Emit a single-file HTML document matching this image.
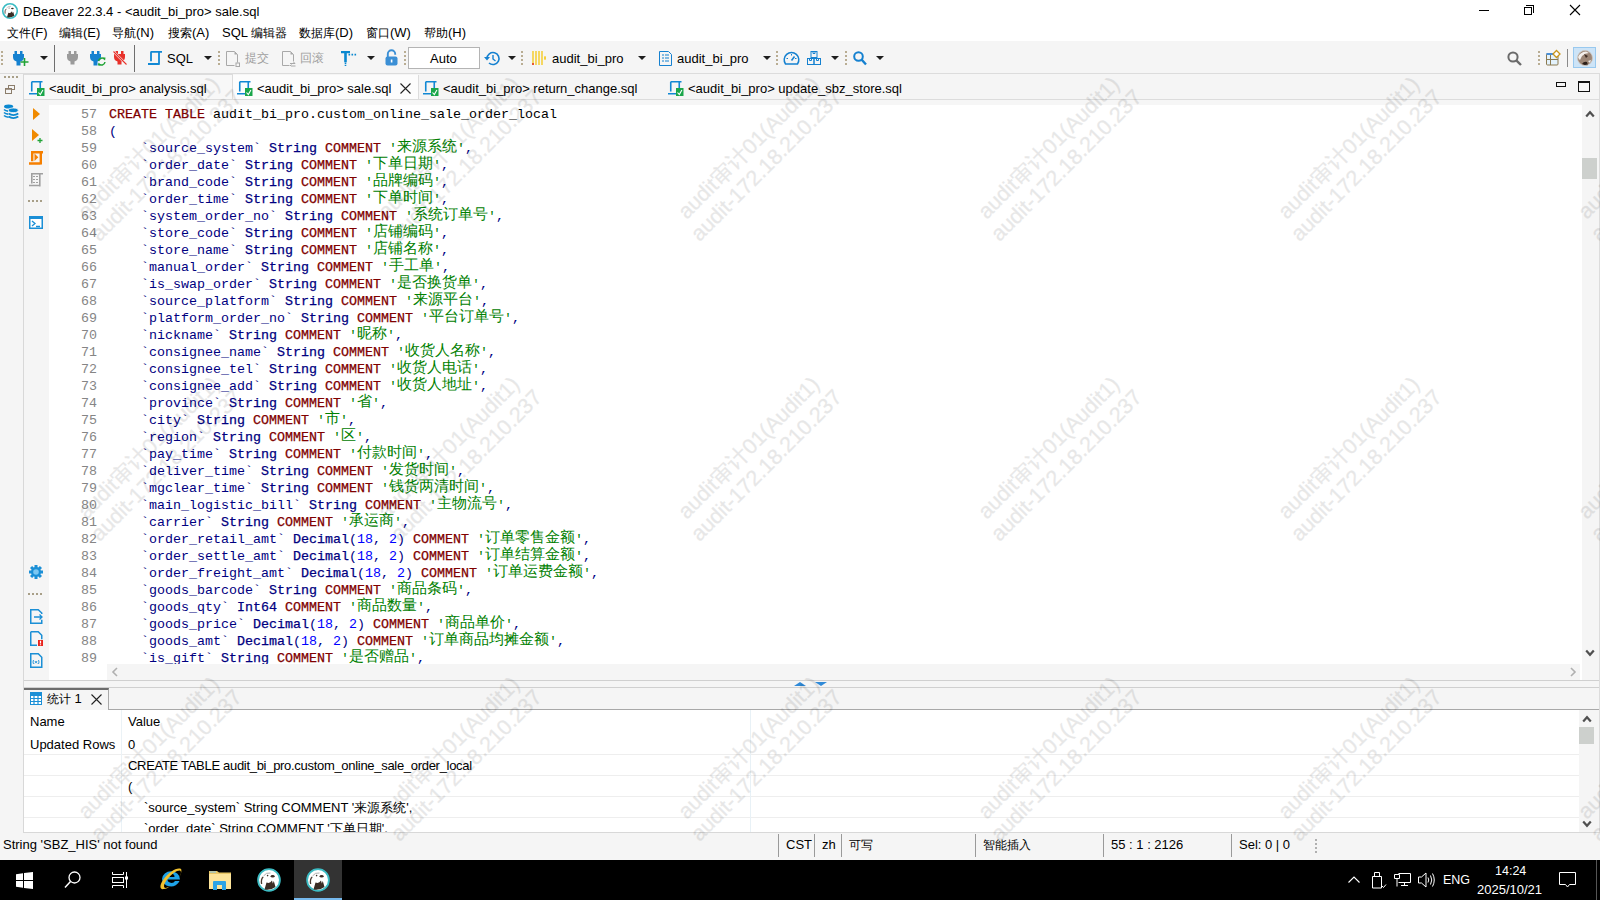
<!DOCTYPE html>
<html><head><meta charset="utf-8">
<style>
*{box-sizing:border-box;margin:0;padding:0}
html,body{width:1600px;height:900px;overflow:hidden;background:#f5f5f5;font-family:"Liberation Sans",sans-serif;font-size:13px;color:#000;position:relative}
.a{position:absolute}
.tx{position:absolute;white-space:nowrap;line-height:16px}
svg{position:absolute;overflow:visible}
.dd{position:absolute;width:0;height:0;border-left:4px solid transparent;border-right:4px solid transparent;border-top:4px solid #1e1e1e}
.grip{position:absolute;width:2px;height:16px;background:repeating-linear-gradient(to bottom,#b9ad93 0,#b9ad93 2px,transparent 2px,transparent 4px)}
.sep{position:absolute;width:1px;background:#6e6e6e}
.code{position:absolute;left:109px;font-family:"Liberation Mono",monospace;font-size:13.33px;line-height:17px;white-space:pre;color:#000080}
.code div{height:17px}
.k{color:#800000;font-weight:normal;-webkit-text-stroke:0.25px #800000}
.t{color:#000080;font-weight:normal;-webkit-text-stroke:0.25px #000080}
.s{color:#008000}
.n{color:#0000ff}
.p{color:#000}
.cj{display:inline-block;overflow:visible;vertical-align:top;position:relative;top:-3px;font-family:"Liberation Sans",sans-serif;font-size:15px;line-height:17px}
.ln{position:absolute;left:49px;width:48px;text-align:right;font-family:"Liberation Mono",monospace;font-size:13.33px;line-height:17px;color:#858585;white-space:pre}
.zh{font-size:12px;vertical-align:top;position:relative;top:0px}
</style></head><body>
<style>
.wm{transform:rotate(-45deg);text-align:center;font-size:21.5px;line-height:25px;color:#000;opacity:0.09;-webkit-text-stroke:0.35px #000;white-space:nowrap}
</style>

<div class="a" style="left:0;top:0;width:1600px;height:41px;background:#fff"></div>
<!-- app icon -->
<svg style="left:2px;top:3px" width="16" height="16" viewBox="0 0 24 24">
<circle cx="12" cy="12" r="10.9" fill="#fff" stroke="#3cbcc4" stroke-width="2.4"/>
<path d="M7.5 21.5 L9.5 14.5 Q13 16 15 12.5 L15.8 15.5 L16.8 13 L18.5 19 Q14 22.5 7.5 21.5z" fill="#3a2c24"/>
<ellipse cx="15.6" cy="8.2" rx="2" ry="1.2" fill="#3a2c24"/>
<circle cx="10.6" cy="7.6" r="0.8" fill="#3a2c24"/>
<path d="M4.6 16 Q3.8 11 6.2 9" stroke="#4a3a30" stroke-width="1.3" fill="none"/>
<path d="M6.5 8 Q9 4.2 13.5 5" stroke="#9a9a9a" stroke-width=".8" fill="none"/>
</svg>
<div class="tx" style="left:23px;top:4px">DBeaver 22.3.4 - &lt;audit_bi_pro&gt; sale.sql</div>
<!-- window controls -->
<div class="a" style="left:1479px;top:10px;width:10px;height:1px;background:#000"></div>
<div class="a" style="left:1524px;top:7px;width:8px;height:8px;border:1px solid #000"></div>
<div class="a" style="left:1526px;top:5px;width:8px;height:8px;border-top:1px solid #000;border-right:1px solid #000"></div>
<svg style="left:1570px;top:5px" width="10" height="10" viewBox="0 0 10 10"><path d="M0 0 L10 10 M10 0 L0 10" stroke="#000" stroke-width="1.1"/></svg>
<!-- menu -->
<div class="tx" style="left:7px;top:25px"><span class="zh">文件</span>(F)</div>
<div class="tx" style="left:59px;top:25px"><span class="zh">编辑</span>(E)</div>
<div class="tx" style="left:112px;top:25px"><span class="zh">导航</span>(N)</div>
<div class="tx" style="left:168px;top:25px"><span class="zh">搜索</span>(A)</div>
<div class="tx" style="left:222px;top:25px">SQL <span class="zh">编辑器</span></div>
<div class="tx" style="left:299px;top:25px"><span class="zh">数据库</span>(D)</div>
<div class="tx" style="left:366px;top:25px"><span class="zh">窗口</span>(W)</div>
<div class="tx" style="left:424px;top:25px"><span class="zh">帮助</span>(H)</div>

<div class="a" style="left:0;top:41px;width:1600px;height:33px;background:#f5f5f5;border-bottom:1px solid #dcdcdc"></div>
<div class="grip" style="left:1px;top:51px"></div>
<!-- new connection plug + -->
<svg style="left:13px;top:50px" width="16" height="16" viewBox="0 0 16 16">
<path d="M1.5 1 h2.5 v3.5 h-2.5z M7 1 h2.5 v3.5 h-2.5z" fill="#1581d0"/>
<path d="M0 4 h11 v3 q0 3.5 -3.5 4.5 v4 h-4 v-4 q-3.5 -1 -3.5 -4.5z" fill="#1581d0"/>
<path d="M11.5 8 v8 M7.5 12 h8" stroke="#21a336" stroke-width="1.6"/>
</svg>
<div class="dd" style="left:40px;top:56px"></div>
<div class="sep" style="left:54px;top:45px;height:27px"></div>
<!-- disconnect gray -->
<svg style="left:67px;top:51px" width="12" height="14" viewBox="0 0 12 14">
<path d="M1.5 0 h2.5 v3.5 h-2.5z M7 0 h2.5 v3.5 h-2.5z" fill="#9a9a9a"/>
<path d="M0 3 h11 v3 q0 3.5 -3.5 4.5 v3 h-4 v-3 q-3.5 -1 -3.5 -4.5z" fill="#9a9a9a"/>
</svg>
<!-- reconnect -->
<svg style="left:90px;top:51px" width="16" height="15" viewBox="0 0 16 15">
<path d="M1.5 0 h2.5 v3.5 h-2.5z M7 0 h2.5 v3.5 h-2.5z" fill="#1581d0"/>
<path d="M0 3 h11 v3 q0 3.5 -3.5 4.5 v4 h-4 v-4 q-3.5 -1 -3.5 -4.5z" fill="#1581d0"/>
<path d="M8.5 10 a3.6 3.6 0 0 1 6.3 -1.6 M15 11 a3.6 3.6 0 0 1 -6.3 1.8" stroke="#21a336" stroke-width="1.5" fill="none"/>
<path d="M13 6.5 l2.5 0 l-.5 3z M10.5 14.5 l-2.5 0 l.5 -3z" fill="#21a336"/>
</svg>
<!-- disconnect all red -->
<svg style="left:113px;top:51px" width="14" height="14" viewBox="0 0 14 14">
<path d="M2.5 0 h2.5 v3.5 h-2.5z M8 0 h2.5 v3.5 h-2.5z" fill="#e8312a"/>
<path d="M1 3 h11 v3 q0 3.5 -3.5 4.5 v3 h-4 v-3 q-3.5 -1 -3.5 -4.5z" fill="#e8312a"/>
<path d="M0.5 0.5 L13.5 13.5" stroke="#f5f5f5" stroke-width="2.4"/>
<path d="M0.5 0.5 L13.5 13.5" stroke="#e8312a" stroke-width="1.1"/>
</svg>
<div class="sep" style="left:134px;top:45px;height:27px"></div>
<!-- SQL script icon -->
<svg style="left:148px;top:50px" width="15" height="16" viewBox="0 0 15 16">
<path d="M2.5 1.9 h11.5 M3 2 v9.2 M11 2 v12.5 M0 14 h11.5" stroke="#1188d4" stroke-width="1.8" fill="none"/>
</svg>
<div class="tx" style="left:167px;top:51px">SQL</div>
<div class="dd" style="left:204px;top:56px"></div>
<div class="grip" style="left:218px;top:51px"></div>
<!-- commit (disabled) -->
<svg style="left:226px;top:51px" width="14" height="16" viewBox="0 0 14 16">
<path d="M0.5 0.5 h8 l3 3 v8 M0.5 0.5 v14 h8" stroke="#a8a8a8" stroke-width="1" fill="none"/>
<path d="M8.5 0.5 v3 h3z" fill="#a8a8a8"/>
<rect x="10" y="12" width="3.5" height="3.5" stroke="#a8a8a8" fill="none"/>
</svg>
<div class="tx" style="left:245px;top:50px;color:#a0a0a0"><span class="zh">提交</span></div>
<svg style="left:282px;top:51px" width="14" height="16" viewBox="0 0 14 16">
<path d="M0.5 0.5 h8 l3 3 v7 M0.5 0.5 v14 h7" stroke="#a8a8a8" stroke-width="1" fill="none"/>
<path d="M8.5 0.5 v3 h3z" fill="#a8a8a8"/>
<path d="M8 12.5 h5 M9 15 h4.5 M11.5 11 l1.5 1.5 M9.5 13.5 l-1.5 1.5" stroke="#a8a8a8" fill="none"/>
</svg>
<div class="tx" style="left:300px;top:50px;color:#a0a0a0"><span class="zh">回滚</span></div>
<!-- T format -->
<svg style="left:341px;top:51px" width="16" height="15" viewBox="0 0 16 15">
<path d="M0 0 h9 v2.2 h-3.2 v9 h-2.6 v-9 h-3.2z" fill="#0a88d0"/>
<path d="M7.5 3.6 h1.6 M10.5 3.6 h1.6 M13.5 3.6 h1.6 M4.5 11.5 v1.5 M4.5 13.8 v1.2" stroke="#0a88d0" stroke-width="1.6"/>
</svg>
<div class="dd" style="left:367px;top:56px"></div>
<!-- lock -->
<svg style="left:385px;top:50px" width="13" height="16" viewBox="0 0 13 16">
<path d="M2.8 7 v-3 a3.7 3.7 0 0 1 7.4 0 v0.8" stroke="#3b8fd5" stroke-width="1.9" fill="none"/>
<rect x="0.5" y="6.5" width="12" height="9" rx="2" fill="#3b8fd5"/>
<rect x="5.8" y="9.5" width="1.6" height="3" fill="#fff"/>
</svg>
<div class="grip" style="left:404px;top:51px"></div>
<div class="a" style="left:408px;top:47px;width:72px;height:22px;background:#fff;border:1px solid #b4b4b4"></div>
<div class="tx" style="left:430px;top:51px">Auto</div>
<!-- history -->
<svg style="left:484px;top:51px" width="16" height="15" viewBox="0 0 16 15">
<path d="M3 7.5 a6 6 0 1 1 2 4.5" stroke="#1581d0" stroke-width="1.6" fill="none"/>
<path d="M0 6 l3 3.5 l3 -3.5 z" fill="#1581d0"/>
<path d="M9 4 v4 l2.5 2" stroke="#1581d0" stroke-width="1.4" fill="none"/>
</svg>
<div class="dd" style="left:508px;top:56px"></div>
<div class="grip" style="left:521px;top:51px"></div>
<!-- datasource bars -->
<svg style="left:532px;top:51px" width="16" height="15" viewBox="0 0 16 15">
<path d="M1 0 v14 M4 0 v14 M7 0 v14 M10 0 v14" stroke="#f5c400" stroke-width="1.2"/>
<path d="M1 12 v2" stroke="#e02020" stroke-width="1.4"/>
<path d="M13 5 v4 M12 7 h2" stroke="#f5c400" stroke-width="1"/>
</svg>
<div class="tx" style="left:552px;top:51px">audit_bi_pro</div>
<div class="dd" style="left:638px;top:56px"></div>
<!-- schema doc -->
<svg style="left:659px;top:51px" width="13" height="15" viewBox="0 0 13 15">
<path d="M0.5 0.5 h9 l3 3 v11 h-12 z" stroke="#1581d0" stroke-width="1" fill="none"/>
<path d="M3 4 h2 M6 4 h4 M3 7 h2 M6 7 h4 M3 10 h2 M6 10 h4" stroke="#1581d0" stroke-width="1.2"/>
</svg>
<div class="tx" style="left:677px;top:51px">audit_bi_pro</div>
<div class="dd" style="left:763px;top:56px"></div>
<div class="grip" style="left:776px;top:51px"></div>
<!-- gauge -->
<svg style="left:783px;top:51px" width="17" height="14" viewBox="0 0 17 14">
<path d="M2.5 13 a7.3 7.3 0 1 1 12 0 z" stroke="#1581d0" stroke-width="1.5" fill="none"/>
<path d="M8.5 9.5 L11.5 5.5" stroke="#1581d0" stroke-width="1.6"/>
<path d="M3.5 7.5 h1.5 M8.5 3 v1.5 M12 7.5 h1.5" stroke="#1581d0" stroke-width="1"/>
</svg>
<!-- boxes -->
<svg style="left:807px;top:51px" width="14" height="14" viewBox="0 0 14 14">
<rect x="4" y="0.5" width="6" height="6" stroke="#1581d0" fill="none"/>
<rect x="0.5" y="7.5" width="6.5" height="6" stroke="#1581d0" fill="none"/>
<rect x="7" y="7.5" width="6.5" height="6" stroke="#1581d0" fill="none"/>
<path d="M6 0.5 v2 h2 v-2 M2.5 7.5 v2 h2 v-2 M9.5 7.5 v2 h2 v-2" stroke="#1581d0" fill="none"/>
</svg>
<div class="dd" style="left:831px;top:56px"></div>
<div class="grip" style="left:845px;top:51px"></div>
<!-- search blue -->
<svg style="left:853px;top:51px" width="14" height="15" viewBox="0 0 14 15">
<circle cx="5.5" cy="5.5" r="4.3" stroke="#1581d0" stroke-width="2" fill="none"/>
<path d="M8.5 8.5 L13 13.5" stroke="#1581d0" stroke-width="2.4"/>
</svg>
<div class="dd" style="left:876px;top:56px"></div>
<!-- right side -->
<svg style="left:1507px;top:51px" width="15" height="15" viewBox="0 0 15 15">
<circle cx="6" cy="6" r="4.6" stroke="#6b6b6b" stroke-width="2" fill="none"/>
<path d="M9.3 9.3 L14 14" stroke="#6b6b6b" stroke-width="2.4"/>
</svg>
<div class="grip" style="left:1538px;top:51px;height:14px"></div>
<svg style="left:1546px;top:50px" width="16" height="16" viewBox="0 0 16 16">
<rect x="0.5" y="3.5" width="11.5" height="11.5" rx="1" fill="#e3f2fc" stroke="#8b7a50"/>
<rect x="0.5" y="3" width="11.5" height="2" fill="#4a90d9"/>
<path d="M4.5 5 v10 M0.5 9.5 h11.5" stroke="#8b7a50"/>
<path d="M10.5 0.5 L14 4 L10.5 7.5 L7 4 z" fill="#fff" stroke="#c9961a" stroke-width="1.3"/>
</svg>
<div class="sep" style="left:1567px;top:49px;height:18px;background:#8a8a8a"></div>
<div class="a" style="left:1573px;top:47px;width:23px;height:21px;background:#cde4f7;border:1px solid #99c9ef"></div>
<svg style="left:1577px;top:50px" width="16" height="16" viewBox="0 0 16 16">
<circle cx="8" cy="8" r="7.5" fill="#9c8676"/>
<path d="M1 7 Q3 2 9 1.5 L12 3 Q8 3 5 6 L3 10 Q1.5 9 1 7z" fill="#f4f0ec"/>
<path d="M7 4 L11 6 L9 8z" fill="#3a2a22"/>
<path d="M5 14 Q7 11 10 12 L11 15 Q8 16 5 14z" fill="#2a1e18"/>
<path d="M11 11 L14 10 L13 13z" fill="#eee"/>
<circle cx="8" cy="8" r="7.5" fill="none" stroke="#cfc6bf" stroke-width=".8"/>
</svg>

<!-- left trim -->
<div class="a" style="left:0;top:74px;width:24px;height:759px;background:#f5f5f5;border-right:1px solid #d8d8d8"></div>
<div class="a" style="left:4px;top:76px;width:15px;height:2px;background:repeating-linear-gradient(to right,#a89f88 0,#a89f88 2px,transparent 2px,transparent 4px)"></div>
<svg style="left:5px;top:85px" width="10" height="9" viewBox="0 0 10 9">
<rect x="3.5" y="0.5" width="6" height="4" stroke="#8b7d6b" fill="#f5f5f5"/>
<rect x="0.5" y="3.5" width="6" height="5" stroke="#8b7d6b" fill="#f5f5f5"/>
<path d="M0.5 4 h6" stroke="#8b7d6b" stroke-width="1.5"/>
</svg>
<!-- db navigator icon -->
<svg style="left:3px;top:103px" width="17" height="17" viewBox="0 0 17 17">
<ellipse cx="5.6" cy="3.5" rx="4.6" ry="2" fill="#0a88d0"/>
<path d="M1 6.5 q1.5 1.5 4 1.6 M1 9.5 q1.5 1.5 4 1.6 M1 12.5 q1.5 1.5 4.5 1.8" stroke="#0a88d0" stroke-width="1.6" fill="none"/>
<ellipse cx="10.3" cy="7.3" rx="4.9" ry="2.3" fill="#0a88d0" stroke="#f5f5f5" stroke-width=".8"/>
<path d="M5.5 10.6 q4.8 3.2 9.8 0 M5.5 13.6 q4.8 3.2 9.8 0" stroke="#0a88d0" stroke-width="1.8" fill="none"/>
</svg>
<!-- tab strip -->
<div class="a" style="left:24px;top:74px;width:1576px;height:27px;background:#f5f5f5;border-bottom:1px solid #dcdcdc"></div>
<div class="a" style="left:24px;top:74px;width:209px;height:26px;background:#f8f8f8;border-top:1px solid #dcdcdc;border-right:1px solid #dcdcdc"></div>
<div class="a" style="left:232px;top:75px;width:187px;height:26px;background:#fcfcfc;border-left:1px solid #dcdcdc;border-right:1px solid #dcdcdc"></div>
<!-- tab icons -->
<svg style="left:29px;top:81px" width="16" height="16" viewBox="0 0 16 16">
<path d="M2.5 0.8 h11 M2.75 1 v9.5 M11.25 1 v6.5 M0 12.75 h8.5" stroke="#1188d4" stroke-width="1.6" fill="none"/>
<rect x="8" y="7" width="7.5" height="8" fill="#1aa64a"/>
<path d="M9.5 11.5 l1.8 2 l2.6 -4.5" stroke="#fff" stroke-width="1.1" fill="none"/>
</svg>
<div class="tx" style="left:49px;top:81px">&lt;audit_bi_pro&gt; analysis.sql</div>
<svg style="left:237px;top:81px" width="16" height="16" viewBox="0 0 16 16">
<path d="M2.5 0.8 h11 M2.75 1 v9.5 M11.25 1 v6.5 M0 12.75 h8.5" stroke="#1188d4" stroke-width="1.6" fill="none"/>
<rect x="8" y="7" width="7.5" height="8" fill="#1aa64a"/>
<path d="M9.5 11.5 l1.8 2 l2.6 -4.5" stroke="#fff" stroke-width="1.1" fill="none"/>
</svg>
<div class="tx" style="left:257px;top:81px">&lt;audit_bi_pro&gt; sale.sql</div>
<svg style="left:400px;top:83px" width="11" height="11" viewBox="0 0 11 11"><path d="M0.5 0.5 L10.5 10.5 M10.5 0.5 L0.5 10.5" stroke="#222" stroke-width="1.1"/></svg>
<svg style="left:423px;top:81px" width="16" height="16" viewBox="0 0 16 16">
<path d="M2.5 0.8 h11 M2.75 1 v9.5 M11.25 1 v6.5 M0 12.75 h8.5" stroke="#1188d4" stroke-width="1.6" fill="none"/>
<rect x="8" y="7" width="7.5" height="8" fill="#1aa64a"/>
<path d="M9.5 11.5 l1.8 2 l2.6 -4.5" stroke="#fff" stroke-width="1.1" fill="none"/>
</svg>
<div class="tx" style="left:443px;top:81px">&lt;audit_bi_pro&gt; return_change.sql</div>
<svg style="left:668px;top:81px" width="16" height="16" viewBox="0 0 16 16">
<path d="M2.5 0.8 h11 M2.75 1 v9.5 M11.25 1 v6.5 M0 12.75 h8.5" stroke="#1188d4" stroke-width="1.6" fill="none"/>
<rect x="8" y="7" width="7.5" height="8" fill="#1aa64a"/>
<path d="M9.5 11.5 l1.8 2 l2.6 -4.5" stroke="#fff" stroke-width="1.1" fill="none"/>
</svg>
<div class="tx" style="left:688px;top:81px">&lt;audit_bi_pro&gt; update_sbz_store.sql</div>
<div class="a" style="left:24px;top:99px;width:1576px;height:1px;background:#dcdcdc"></div>
<!-- min / max -->
<div class="a" style="left:1556px;top:82px;width:10px;height:5px;border:1.5px solid #111"></div>
<div class="a" style="left:1578px;top:81px;width:12px;height:11px;border:1.5px solid #111;border-top-width:2.5px"></div>

<div class="a" style="left:24px;top:100px;width:1576px;height:581px;background:#fff;border-bottom:1px solid #d0d0d0"></div>
<div class="a" style="left:24px;top:100px;width:25px;height:580px;background:#f5f5f5"></div>
<div class="a" style="left:49px;top:100px;width:1533px;height:5px;background:#f6f6f6"></div>
<div class="ln" style="top:106px">57
58
59
60
61
62
63
64
65
66
67
68
69
70
71
72
73
74
75
76
77
78
79
80
81
82
83
84
85
86
87
88
89</div>
<div class="code" style="top:106px"><div><span class="k">CREATE TABLE</span> <span class="p">audit_bi_pro.custom_online_sale_order_local</span></div><div>(</div><div>    `source_system` <span class="t">String</span> <span class="k">COMMENT</span> <span class="s">'<span class="cj" style="width:60px">来源系统</span>'</span>,</div><div>    `order_date` <span class="t">String</span> <span class="k">COMMENT</span> <span class="s">'<span class="cj" style="width:60px">下单日期</span>'</span>,</div><div>    `brand_code` <span class="t">String</span> <span class="k">COMMENT</span> <span class="s">'<span class="cj" style="width:60px">品牌编码</span>'</span>,</div><div>    `order_time` <span class="t">String</span> <span class="k">COMMENT</span> <span class="s">'<span class="cj" style="width:60px">下单时间</span>'</span>,</div><div>    `system_order_no` <span class="t">String</span> <span class="k">COMMENT</span> <span class="s">'<span class="cj" style="width:75px">系统订单号</span>'</span>,</div><div>    `store_code` <span class="t">String</span> <span class="k">COMMENT</span> <span class="s">'<span class="cj" style="width:60px">店铺编码</span>'</span>,</div><div>    `store_name` <span class="t">String</span> <span class="k">COMMENT</span> <span class="s">'<span class="cj" style="width:60px">店铺名称</span>'</span>,</div><div>    `manual_order` <span class="t">String</span> <span class="k">COMMENT</span> <span class="s">'<span class="cj" style="width:45px">手工单</span>'</span>,</div><div>    `is_swap_order` <span class="t">String</span> <span class="k">COMMENT</span> <span class="s">'<span class="cj" style="width:75px">是否换货单</span>'</span>,</div><div>    `source_platform` <span class="t">String</span> <span class="k">COMMENT</span> <span class="s">'<span class="cj" style="width:60px">来源平台</span>'</span>,</div><div>    `platform_order_no` <span class="t">String</span> <span class="k">COMMENT</span> <span class="s">'<span class="cj" style="width:75px">平台订单号</span>'</span>,</div><div>    `nickname` <span class="t">String</span> <span class="k">COMMENT</span> <span class="s">'<span class="cj" style="width:30px">昵称</span>'</span>,</div><div>    `consignee_name` <span class="t">String</span> <span class="k">COMMENT</span> <span class="s">'<span class="cj" style="width:75px">收货人名称</span>'</span>,</div><div>    `consignee_tel` <span class="t">String</span> <span class="k">COMMENT</span> <span class="s">'<span class="cj" style="width:75px">收货人电话</span>'</span>,</div><div>    `consignee_add` <span class="t">String</span> <span class="k">COMMENT</span> <span class="s">'<span class="cj" style="width:75px">收货人地址</span>'</span>,</div><div>    `province` <span class="t">String</span> <span class="k">COMMENT</span> <span class="s">'<span class="cj" style="width:15px">省</span>'</span>,</div><div>    `city` <span class="t">String</span> <span class="k">COMMENT</span> <span class="s">'<span class="cj" style="width:15px">市</span>'</span>,</div><div>    `region` <span class="t">String</span> <span class="k">COMMENT</span> <span class="s">'<span class="cj" style="width:15px">区</span>'</span>,</div><div>    `pay_time` <span class="t">String</span> <span class="k">COMMENT</span> <span class="s">'<span class="cj" style="width:60px">付款时间</span>'</span>,</div><div>    `deliver_time` <span class="t">String</span> <span class="k">COMMENT</span> <span class="s">'<span class="cj" style="width:60px">发货时间</span>'</span>,</div><div>    `mgclear_time` <span class="t">String</span> <span class="k">COMMENT</span> <span class="s">'<span class="cj" style="width:90px">钱货两清时间</span>'</span>,</div><div>    `main_logistic_bill` <span class="t">String</span> <span class="k">COMMENT</span> <span class="s">'<span class="cj" style="width:60px">主物流号</span>'</span>,</div><div>    `carrier` <span class="t">String</span> <span class="k">COMMENT</span> <span class="s">'<span class="cj" style="width:45px">承运商</span>'</span>,</div><div>    `order_retail_amt` <span class="t">Decimal</span>(<span class="n">18</span>, <span class="n">2</span>) <span class="k">COMMENT</span> <span class="s">'<span class="cj" style="width:90px">订单零售金额</span>'</span>,</div><div>    `order_settle_amt` <span class="t">Decimal</span>(<span class="n">18</span>, <span class="n">2</span>) <span class="k">COMMENT</span> <span class="s">'<span class="cj" style="width:90px">订单结算金额</span>'</span>,</div><div>    `order_freight_amt` <span class="t">Decimal</span>(<span class="n">18</span>, <span class="n">2</span>) <span class="k">COMMENT</span> <span class="s">'<span class="cj" style="width:90px">订单运费金额</span>'</span>,</div><div>    `goods_barcode` <span class="t">String</span> <span class="k">COMMENT</span> <span class="s">'<span class="cj" style="width:60px">商品条码</span>'</span>,</div><div>    `goods_qty` <span class="t">Int64</span> <span class="k">COMMENT</span> <span class="s">'<span class="cj" style="width:60px">商品数量</span>'</span>,</div><div>    `goods_price` <span class="t">Decimal</span>(<span class="n">18</span>, <span class="n">2</span>) <span class="k">COMMENT</span> <span class="s">'<span class="cj" style="width:60px">商品单价</span>'</span>,</div><div>    `goods_amt` <span class="t">Decimal</span>(<span class="n">18</span>, <span class="n">2</span>) <span class="k">COMMENT</span> <span class="s">'<span class="cj" style="width:120px">订单商品均摊金额</span>'</span>,</div><div>    `is_gift` <span class="t">String</span> <span class="k">COMMENT</span> <span class="s">'<span class="cj" style="width:60px">是否赠品</span>'</span>,</div></div>
<div class="a" style="left:107px;top:664px;width:1473px;height:16px;background:#f5f5f5"></div>
<div class="a" style="left:1582px;top:100px;width:18px;height:580px;background:#f5f5f5"></div>
<!-- ruler icons -->
<svg style="left:33px;top:108px" width="7" height="12" viewBox="0 0 7 12"><path d="M0 0 L7 6 L0 12 z" fill="#f08a00"/></svg>
<svg style="left:32px;top:129px" width="11" height="14" viewBox="0 0 11 14"><path d="M0 0 L7 6 L0 12 z" fill="#f08a00"/><path d="M8 9 v5 M5.5 11.5 h5" stroke="#21a336" stroke-width="1.3"/></svg>
<svg style="left:29px;top:150px" width="15" height="16" viewBox="0 0 15 16">
<path d="M2 2.2 h12 M3.2 2 v9.2 M11.8 2 v12.5 M0 13.5 h11.5" stroke="#f57f00" stroke-width="2.4" fill="none"/>
<path d="M5.5 3.5 L9.3 7.2 L5.5 11 z" fill="#f57f00"/>
</svg>
<svg style="left:29px;top:172px" width="15" height="16" viewBox="0 0 15 16">
<path d="M2 1.8 h12 M2.8 2 v9.5 M10.8 2 v12.5 M0 13.5 h11" stroke="#a0a0a0" stroke-width="1.6" fill="none"/>
<path d="M4 4.5 h2 M7 4.5 h2 M4 7.5 h2 M7 7.5 h2 M4 10.5 h2 M7 10.5 h2" stroke="#a0a0a0" stroke-width="1.1"/>
</svg>
<div class="a" style="left:28px;top:200px;width:14px;height:2px;background:repeating-linear-gradient(to right,#a89f88 0,#a89f88 2px,transparent 2px,transparent 4px)"></div>
<svg style="left:29px;top:216px" width="14" height="13" viewBox="0 0 14 13">
<rect x="0.75" y="0.75" width="12.5" height="11.5" stroke="#1b8fd6" stroke-width="1.5" fill="#fff"/>
<path d="M0.75 2 h12.5" stroke="#1b8fd6" stroke-width="2"/>
<path d="M3 5 L6 7.5 L3 10 M7 10.5 h4" stroke="#1b8fd6" stroke-width="1.3" fill="none"/>
</svg>
<svg style="left:29px;top:565px" width="14" height="14" viewBox="0 0 14 14">
<g fill="#1b8fd6"><circle cx="7" cy="7" r="5"/>
<rect x="5.5" y="0" width="3" height="14"/><rect x="0" y="5.5" width="14" height="3"/>
<rect x="5.5" y="0" width="3" height="14" transform="rotate(45 7 7)"/><rect x="0" y="5.5" width="14" height="3" transform="rotate(45 7 7)"/></g>
<circle cx="7" cy="7" r="2.8" fill="#7cc8f2"/>
</svg>
<div class="a" style="left:28px;top:593px;width:14px;height:2px;background:repeating-linear-gradient(to right,#a89f88 0,#a89f88 2px,transparent 2px,transparent 4px)"></div>
<svg style="left:30px;top:609px" width="13" height="15" viewBox="0 0 13 15">
<path d="M11.75 5 v-1 l-3.5 -3.25 h-7.5 v13.5 h11 v-3.5" stroke="#1b8fd6" stroke-width="1.5" fill="none"/>
<path d="M4 8 h8 M9.5 5.5 L12 8 L9.5 10.5" stroke="#1b8fd6" stroke-width="1.3" fill="none"/>
</svg>
<svg style="left:30px;top:631px" width="13" height="15" viewBox="0 0 13 15">
<path d="M0.75 0.75 h7.5 l3.5 3.5 v4 M7 14.25 h-6.25 v-13.5" stroke="#1b8fd6" stroke-width="1.5" fill="none"/>
<rect x="8" y="9" width="5" height="6" fill="#e8241d"/>
<path d="M10.5 9.8 v2.6 M10.5 13.3 v1" stroke="#fff" stroke-width="1.2"/>
</svg>
<svg style="left:30px;top:653px" width="13" height="15" viewBox="0 0 13 15">
<path d="M0.75 0.75 h7.5 l3.5 3.5 v10 h-11 z" stroke="#1b8fd6" stroke-width="1.5" fill="none"/>
<path d="M3.5 7 q-1 2 0 4 M8.5 7 q1 2 0 4 M4.8 8 l2.4 2.4 M7.2 8 l-2.4 2.4" stroke="#1b8fd6" stroke-width=".9" fill="none"/>
</svg>
<!-- editor scrollbars -->
<svg style="left:1585px;top:110px" width="10" height="8" viewBox="0 0 10 8"><path d="M1.2 6.5 L5 2.2 L8.8 6.5" stroke="#505050" stroke-width="2.2" fill="none"/></svg>
<div class="a" style="left:1582px;top:158px;width:15px;height:21px;background:#cdd0cd"></div>
<svg style="left:1585px;top:649px" width="10" height="8" viewBox="0 0 10 8"><path d="M1.2 1.5 L5 5.8 L8.8 1.5" stroke="#505050" stroke-width="2.2" fill="none"/></svg>
<svg style="left:112px;top:667px" width="6" height="10" viewBox="0 0 6 10"><path d="M5 1 L1 5 L5 9" stroke="#b0b0b0" stroke-width="1.6" fill="none"/></svg>
<svg style="left:1570px;top:667px" width="6" height="10" viewBox="0 0 6 10"><path d="M1 1 L5 5 L1 9" stroke="#b0b0b0" stroke-width="1.6" fill="none"/></svg>

<!-- splitter -->
<div class="a" style="left:24px;top:681px;width:1576px;height:29px;background:#f5f5f5"></div>
<div class="a" style="left:24px;top:687px;width:1576px;height:1px;background:#d0d0d0"></div>
<svg style="left:794px;top:681px" width="36" height="6" viewBox="0 0 36 6">
<path d="M0 5 L6 1 L12 5 z" fill="#2f8ad8"/>
<path d="M21 1 L27 5 L33 1 z" fill="#2f8ad8"/>
</svg>
<!-- bottom tab -->
<div class="a" style="left:24px;top:709px;width:1576px;height:1px;background:#a8a8a8"></div>
<div class="a" style="left:24px;top:688px;width:85px;height:22px;background:#f5f5f5;border-right:1px solid #a8a8a8;border-top:2px solid #6d6d6d"></div>
<svg style="left:30px;top:692px" width="12" height="13" viewBox="0 0 12 13">
<rect x="0.5" y="0.5" width="11" height="12" fill="#fff" stroke="#1b8fd6"/>
<rect x="0" y="0" width="12" height="3" fill="#1b8fd6"/>
<path d="M0 3.5 h12 M0 6.5 h12 M0 9.5 h12 M4 0 v13 M8 0 v13" stroke="#1b8fd6" stroke-width="1.2"/>
</svg>
<div class="tx" style="left:47px;top:691px"><span class="zh">统计</span> 1</div>
<svg style="left:91px;top:694px" width="11" height="11" viewBox="0 0 11 11"><path d="M0.5 0.5 L10.5 10.5 M10.5 0.5 L0.5 10.5" stroke="#222" stroke-width="1.1"/></svg>
<!-- table -->
<div class="a" style="left:24px;top:710px;width:1555px;height:123px;background:#fff"></div>
<div class="a" style="left:24px;top:754px;width:1555px;height:1px;background:#eeeeee"></div>
<div class="a" style="left:24px;top:775px;width:1555px;height:1px;background:#eeeeee"></div>
<div class="a" style="left:24px;top:796px;width:1555px;height:1px;background:#eeeeee"></div>
<div class="a" style="left:24px;top:817px;width:1555px;height:1px;background:#eeeeee"></div>
<div class="a" style="left:121px;top:710px;width:1px;height:123px;background:#ebf2f6"></div>
<div class="a" style="left:750px;top:710px;width:1px;height:123px;background:#e8f1f6"></div>
<div class="tx" style="left:30px;top:714px">Name</div>
<div class="tx" style="left:128px;top:714px">Value</div>
<div class="tx" style="left:30px;top:737px">Updated Rows</div>
<div class="tx" style="left:128px;top:737px">0</div>
<div class="tx" style="left:128px;top:758px;letter-spacing:-0.3px">CREATE TABLE audit_bi_pro.custom_online_sale_order_local</div>
<div class="tx" style="left:128px;top:779px">(</div>
<div class="tx" style="left:144px;top:800px">`source_system` String COMMENT '来源系统',</div>
<div class="tx" style="left:144px;top:821px;height:12px;overflow:hidden">`order_date` String COMMENT '下单日期',</div>
<!-- table vscroll -->
<div class="a" style="left:1579px;top:710px;width:21px;height:123px;background:#f5f5f5"></div>
<svg style="left:1582px;top:715px" width="10" height="8" viewBox="0 0 10 8"><path d="M1.2 6.5 L5 2.2 L8.8 6.5" stroke="#505050" stroke-width="2.2" fill="none"/></svg>
<div class="a" style="left:1579px;top:727px;width:15px;height:17px;background:#cdd0cd"></div>
<svg style="left:1582px;top:820px" width="10" height="8" viewBox="0 0 10 8"><path d="M1.2 1.5 L5 5.8 L8.8 1.5" stroke="#505050" stroke-width="2.2" fill="none"/></svg>
<div class="a" style="left:24px;top:832px;width:1576px;height:1px;background:#d8d8d8"></div>
<div class="a" style="left:1599px;top:74px;width:1px;height:759px;background:#dcdcdc"></div>

<div class="a" style="left:0;top:833px;width:1600px;height:27px;background:#f5f5f5"></div>
<div class="tx" style="left:3px;top:837px">String 'SBZ_HIS' not found</div>
<div class="a" style="left:778px;top:834px;width:1px;height:23px;background:#9a9a9a"></div>
<div class="a" style="left:814px;top:834px;width:1px;height:23px;background:#9a9a9a"></div>
<div class="a" style="left:841px;top:834px;width:1px;height:23px;background:#9a9a9a"></div>
<div class="a" style="left:975px;top:834px;width:1px;height:23px;background:#9a9a9a"></div>
<div class="a" style="left:1103px;top:834px;width:1px;height:23px;background:#9a9a9a"></div>
<div class="a" style="left:1231px;top:834px;width:1px;height:23px;background:#9a9a9a"></div>
<div class="a" style="left:1315px;top:839px;width:2px;height:14px;background:repeating-linear-gradient(to bottom,#b0b0b0 0,#b0b0b0 2px,transparent 2px,transparent 4px)"></div>
<div class="tx" style="left:786px;top:837px">CST</div>
<div class="tx" style="left:822px;top:837px">zh</div>
<div class="tx" style="left:849px;top:837px"><span class="zh">可写</span></div>
<div class="tx" style="left:983px;top:837px"><span class="zh">智能插入</span></div>
<div class="tx" style="left:1111px;top:837px">55 : 1 : 2126</div>
<div class="tx" style="left:1239px;top:837px">Sel: 0 | 0</div>

<div class="a" style="left:0;top:860px;width:1600px;height:40px;background:#000"></div>
<!-- start -->
<svg style="left:16px;top:872px" width="17" height="17" viewBox="0 0 17 17">
<path d="M0 2.3 L7 1.3 V8 H0 z M8 1.1 L17 0 V8 H8 z M0 9 H7 V15.7 L0 14.7 z M8 9 H17 V17 L8 15.9 z" fill="#fff"/>
</svg>
<!-- search -->
<svg style="left:64px;top:871px" width="17" height="18" viewBox="0 0 17 18">
<circle cx="10.5" cy="6.5" r="5.5" stroke="#fff" stroke-width="1.3" fill="none"/>
<path d="M6.5 10.5 L1 16.5" stroke="#fff" stroke-width="1.5"/>
</svg>
<!-- task view -->
<svg style="left:112px;top:872px" width="17" height="16" viewBox="0 0 17 16">
<path d="M0.5 0 v2.5 h11 v-2.5 M0.5 16 v-2.5 h11 v2.5" stroke="#fff" stroke-width="1" fill="none"/>
<rect x="0.5" y="5.5" width="11" height="5" stroke="#fff" stroke-width="1" fill="none"/>
<path d="M14.5 0 v16" stroke="#fff" stroke-width="1"/>
<rect x="13" y="4.5" width="3" height="3" fill="#fff"/>
</svg>
<!-- IE -->
<svg style="left:159px;top:867px" width="24" height="24" viewBox="0 0 24 24">
<path d="M3 12 a9 8 0 1 1 18 0.5 H8.5 a4 3.6 0 0 0 7.5 1.5 H20.5 a9 8 0 0 1 -17.5 -2z" fill="#1fa3e8"/>
<path d="M8.5 10 h7 a3.5 3.2 0 0 0 -7 0z" fill="#000"/>
<path d="M22 2 c-4 -2 -12 3 -18 11 c-4 6 -3 10 1 9 c2 0 4 -1 6 -3 c-3 2 -6 3 -6 0 c0 -4 7 -12 13 -15 c3 -1 4 -1 4 2 c0 1 -1 3 -2 4 c2 -2 3 -7 2 -8z" fill="#f2c230"/>
</svg>
<!-- folder -->
<svg style="left:209px;top:870px" width="22" height="20" viewBox="0 0 22 20">
<path d="M0 1 h8 l2 1.5 h12 v16.5 h-22 z" fill="#e9c766"/>
<path d="M0 4 h22 v15 h-22 z" fill="#fde49a"/>
<path d="M1 2 h6" stroke="#7fc4f0" stroke-width="1"/>
<path d="M4 20 v-8 q0 -1 1 -1 h11 q1 0 1 1 v8 h-4 v-5 h-5 v5 z" fill="#2ba3e6"/>
</svg>
<!-- dbeaver icons -->
<svg style="left:257px;top:868px" width="24" height="24" viewBox="0 0 24 24">
<circle cx="12" cy="12" r="10.9" fill="#fff" stroke="#3cbcc4" stroke-width="1.8"/>
<path d="M7.5 21.5 L9.5 14.5 Q13 16 15 12.5 L15.8 15.5 L16.8 13 L18.5 19 Q14 22.5 7.5 21.5z" fill="#3a2c24"/>
<ellipse cx="15.6" cy="8.2" rx="2" ry="1.2" fill="#3a2c24"/>
<circle cx="10.6" cy="7.6" r="0.8" fill="#3a2c24"/>
<path d="M4.6 16 Q3.8 11 6.2 9" stroke="#4a3a30" stroke-width="1.3" fill="none"/>
<path d="M6.5 8 Q9 4.2 13.5 5" stroke="#9a9a9a" stroke-width=".8" fill="none"/>
</svg>
<div class="a" style="left:294px;top:860px;width:48px;height:40px;background:#333"></div>
<div class="a" style="left:294px;top:898px;width:48px;height:2px;background:#76b9ed"></div>
<svg style="left:306px;top:868px" width="24" height="24" viewBox="0 0 24 24">
<circle cx="12" cy="12" r="10.9" fill="#fff" stroke="#3cbcc4" stroke-width="1.8"/>
<path d="M7.5 21.5 L9.5 14.5 Q13 16 15 12.5 L15.8 15.5 L16.8 13 L18.5 19 Q14 22.5 7.5 21.5z" fill="#3a2c24"/>
<ellipse cx="15.6" cy="8.2" rx="2" ry="1.2" fill="#3a2c24"/>
<circle cx="10.6" cy="7.6" r="0.8" fill="#3a2c24"/>
<path d="M4.6 16 Q3.8 11 6.2 9" stroke="#4a3a30" stroke-width="1.3" fill="none"/>
<path d="M6.5 8 Q9 4.2 13.5 5" stroke="#9a9a9a" stroke-width=".8" fill="none"/>
</svg>
<!-- tray -->
<svg style="left:1348px;top:876px" width="12" height="7" viewBox="0 0 12 7"><path d="M0.5 6.5 L6 1 L11.5 6.5" stroke="#fff" stroke-width="1.1" fill="none"/></svg>
<svg style="left:1372px;top:872px" width="14" height="17" viewBox="0 0 14 17">
<path d="M2.5 0.5 h5 v4 M2.5 0.5 v4 M0.5 4.5 h9 v11.5 h-9 z" stroke="#fff" stroke-width="1" fill="none"/>
<path d="M10 14 l1.5 1.5 l2.5 -3" stroke="#fff" stroke-width="1" fill="none"/>
</svg>
<svg style="left:1394px;top:873px" width="17" height="14" viewBox="0 0 17 14">
<path d="M4.5 0.5 h12 v9 h-12 M10.5 9.5 v3 M7 12.5 h7" stroke="#fff" stroke-width="1" fill="none"/>
<path d="M0.5 1.5 h5 v4 h-5 z M3 5.5 v8" stroke="#fff" stroke-width="1" fill="none"/>
</svg>
<svg style="left:1418px;top:872px" width="17" height="16" viewBox="0 0 17 16">
<path d="M0.5 5 h3 l4.5 -4 v14 l-4.5 -4 h-3 z" stroke="#fff" stroke-width="1" fill="none"/>
<path d="M10 5.5 q1.5 2.5 0 5 M12.5 3.5 q2.5 4.5 0 9 M14.5 1.5 q3.5 6.5 0 13" stroke="#fff" stroke-width="1" fill="none"/>
</svg>
<div class="tx" style="left:1443px;top:872px;color:#fff;font-size:12.5px">ENG</div>
<div class="tx" style="left:1495px;top:863px;color:#fff;font-size:12.5px">14:24</div>
<div class="tx" style="left:1477px;top:882px;color:#fff;font-size:13px">2025/10/21</div>
<svg style="left:1559px;top:872px" width="17" height="16" viewBox="0 0 17 16">
<path d="M0.5 0.5 h16 v12 h-6 l-2 2.5 l-2 -2.5 h-6 z" stroke="#fff" stroke-width="1" fill="none"/>
</svg>
<div class="a" style="left:1596px;top:860px;width:1px;height:40px;background:#555"></div>

<div class="a" style="left:0;top:0;width:1600px;height:900px;overflow:hidden;pointer-events:none">
<div class="a wm" style="left:-282px;top:132px;width:280px;height:50px"><div>audit审计01(Audit1)</div><div>audit-172.18.210.237</div></div>
<div class="a wm" style="left:18px;top:132px;width:280px;height:50px"><div>audit审计01(Audit1)</div><div>audit-172.18.210.237</div></div>
<div class="a wm" style="left:318px;top:132px;width:280px;height:50px"><div>audit审计01(Audit1)</div><div>audit-172.18.210.237</div></div>
<div class="a wm" style="left:618px;top:132px;width:280px;height:50px"><div>audit审计01(Audit1)</div><div>audit-172.18.210.237</div></div>
<div class="a wm" style="left:918px;top:132px;width:280px;height:50px"><div>audit审计01(Audit1)</div><div>audit-172.18.210.237</div></div>
<div class="a wm" style="left:1218px;top:132px;width:280px;height:50px"><div>audit审计01(Audit1)</div><div>audit-172.18.210.237</div></div>
<div class="a wm" style="left:1518px;top:132px;width:280px;height:50px"><div>audit审计01(Audit1)</div><div>audit-172.18.210.237</div></div>
<div class="a wm" style="left:-282px;top:432px;width:280px;height:50px"><div>audit审计01(Audit1)</div><div>audit-172.18.210.237</div></div>
<div class="a wm" style="left:18px;top:432px;width:280px;height:50px"><div>audit审计01(Audit1)</div><div>audit-172.18.210.237</div></div>
<div class="a wm" style="left:318px;top:432px;width:280px;height:50px"><div>audit审计01(Audit1)</div><div>audit-172.18.210.237</div></div>
<div class="a wm" style="left:618px;top:432px;width:280px;height:50px"><div>audit审计01(Audit1)</div><div>audit-172.18.210.237</div></div>
<div class="a wm" style="left:918px;top:432px;width:280px;height:50px"><div>audit审计01(Audit1)</div><div>audit-172.18.210.237</div></div>
<div class="a wm" style="left:1218px;top:432px;width:280px;height:50px"><div>audit审计01(Audit1)</div><div>audit-172.18.210.237</div></div>
<div class="a wm" style="left:1518px;top:432px;width:280px;height:50px"><div>audit审计01(Audit1)</div><div>audit-172.18.210.237</div></div>
<div class="a wm" style="left:-282px;top:732px;width:280px;height:50px"><div>audit审计01(Audit1)</div><div>audit-172.18.210.237</div></div>
<div class="a wm" style="left:18px;top:732px;width:280px;height:50px"><div>audit审计01(Audit1)</div><div>audit-172.18.210.237</div></div>
<div class="a wm" style="left:318px;top:732px;width:280px;height:50px"><div>audit审计01(Audit1)</div><div>audit-172.18.210.237</div></div>
<div class="a wm" style="left:618px;top:732px;width:280px;height:50px"><div>audit审计01(Audit1)</div><div>audit-172.18.210.237</div></div>
<div class="a wm" style="left:918px;top:732px;width:280px;height:50px"><div>audit审计01(Audit1)</div><div>audit-172.18.210.237</div></div>
<div class="a wm" style="left:1218px;top:732px;width:280px;height:50px"><div>audit审计01(Audit1)</div><div>audit-172.18.210.237</div></div>
<div class="a wm" style="left:1518px;top:732px;width:280px;height:50px"><div>audit审计01(Audit1)</div><div>audit-172.18.210.237</div></div>
</div>
</body></html>
